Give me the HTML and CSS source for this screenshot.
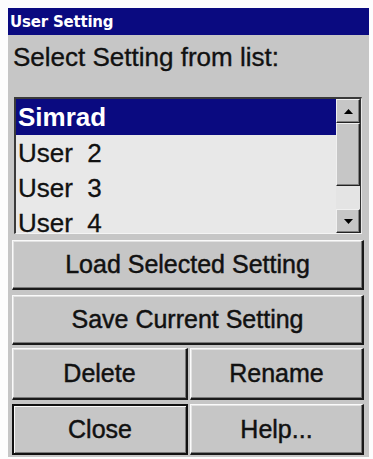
FILE: index.html
```html
<!DOCTYPE html>
<html>
<head>
<meta charset="utf-8">
<link rel="stylesheet" href="styles.css">
</head>
<body>
<div class="dialog">
  <div class="titlebar">User Setting</div>
  <div class="content">
    <div class="label">Select Setting from list:</div>
    <div class="listbox">
      <div class="items">
        <div class="item selected">Simrad</div>
        <div class="item">User  2</div>
        <div class="item">User  3</div>
        <div class="item">User  4</div>
      </div>
      <div class="scrollbar">
        <div class="sb-btn"><svg width="9" height="5" viewBox="0 0 9 5"><path d="M0 5 L4.5 0 L9 5 Z" fill="#000"/></svg></div>
        <div class="sb-track"><div class="sb-thumb"></div></div>
        <div class="sb-btn"><svg width="9" height="5" viewBox="0 0 9 5"><path d="M0 0 L9 0 L4.5 5 Z" fill="#000"/></svg></div>
      </div>
    </div>
    <div class="buttons">
      <div class="btn tall">Load Selected Setting</div>
      <div class="btn tall">Save Current Setting</div>
      <div class="row r1">
        <div class="btn">Delete</div>
        <div class="btn">Rename</div>
      </div>
      <div class="row r2">
        <div class="btn default">Close</div>
        <div class="btn">Help...</div>
      </div>
    </div>
  </div>
</div>
</body>
</html>
```
FILE: styles.css
```css
html, body {
  background: #fdfdfd;
}
body {
  margin: 8px 4px 0 8px;
  font-family: "Liberation Sans", Arial, sans-serif;
}
.dialog {
  width: 361px;
  height: 449px;
  background: #c6c6c6;
  display: flex;
  flex-direction: column;
}
.titlebar {
  height: 27px;
  background: #0a0a80;
  color: #fff;
  font-family: "DejaVu Sans", sans-serif;
  font-weight: bold;
  font-size: 15px;
  line-height: 28px;
  padding-left: 2px;
  letter-spacing: -0.2px;
}
.content {
  padding: 7px 5px 0 4px;
  display: flex;
  flex-direction: column;
}
.label {
  font-size: 26px;
  line-height: 31px;
  color: #111;
  padding-left: 1px;
  -webkit-text-stroke: 0.35px #111;
}
.listbox {
  margin: 24px 2px 0 2px;
  height: 137px;
  box-sizing: border-box;
  border-top: 2px solid #3a3a3a;
  border-left: 2px solid #3a3a3a;
  border-bottom: 1px solid #f4f4f4;
  border-right: 1px solid #e8e8e8;
  background: #e8e8e8;
  display: flex;
}
.items {
  flex: 1;
  overflow: hidden;
}
.item {
  height: 35px;
  line-height: 37px;
  font-size: 26px;
  padding-left: 2px;
  color: #111;
  white-space: pre;
  -webkit-text-stroke: 0.3px #111;
}
.item.selected {
  background: #0a0a80;
  color: #fff;
  font-weight: bold;
  height: 36px;
  -webkit-text-stroke: 0;
}
.scrollbar {
  width: 24px;
  display: flex;
  flex-direction: column;
  border-right: 1px solid #333;
}
.sb-btn {
  height: 24px;
  box-sizing: border-box;
  background: #c6c6c6;
  border-top: 1px solid #f0f0f0;
  border-left: 1px solid #f0f0f0;
  border-right: 1px solid #222;
  border-bottom: 1px solid #222;
  box-shadow: inset -1px -1px #808080;
  display: flex;
  align-items: center;
  justify-content: center;
}
.sb-track {
  flex: 1;
  background: #e4e4e4;
}
.sb-thumb {
  height: 63px;
  box-sizing: border-box;
  background: #c6c6c6;
  border-top: 1px solid #f0f0f0;
  border-left: 1px solid #f0f0f0;
  border-right: 1px solid #222;
  border-bottom: 1px solid #222;
  box-shadow: inset -1px -1px #808080;
}
.buttons {
  margin-top: 6px;
  display: flex;
  flex-direction: column;
}
.btn {
  box-sizing: border-box;
  background: #c6c6c6;
  border-top: 1px solid #fafafa;
  border-left: 1px solid #fafafa;
  border-right: 2px solid #1a1a1a;
  border-bottom: 2px solid #1a1a1a;
  box-shadow: inset -1px -1px #7a7a7a, inset 1px 1px #e2e2e2;
  font-size: 25px;
  color: #111;
  -webkit-text-stroke: 0.45px #111;
  display: flex;
  align-items: center;
  justify-content: center;
}
.btn.tall {
  height: 50px;
}
.btn.tall + .btn.tall {
  margin-top: 5px;
}
.row {
  display: grid;
  grid-template-columns: 176px 1fr;
  gap: 2px;
}
.row .btn {
  height: 100%;
}
.r1 {
  margin-top: 3px;
  height: 52px;
}
.r2 {
  margin-top: 4px;
  height: 51px;
}
.btn.default {
  border: 2px solid #111;
  box-shadow: inset 1px 1px #fafafa, inset -1px -1px #7a7a7a;
}
```
